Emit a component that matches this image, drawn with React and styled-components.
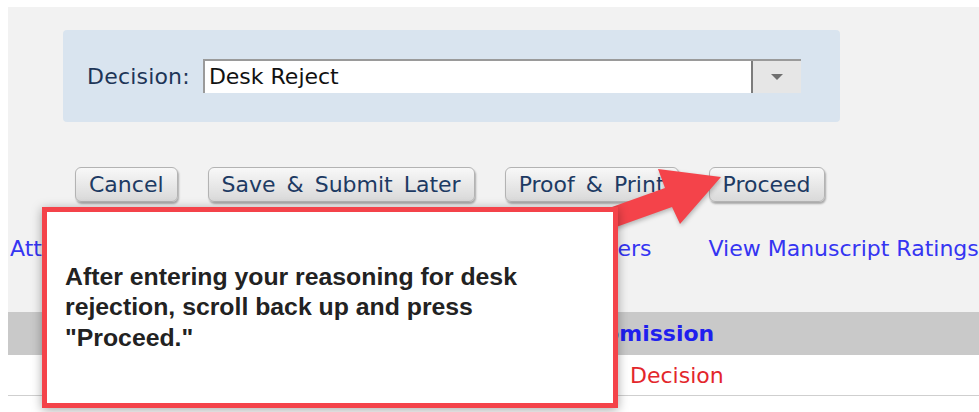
import styled, { createGlobalStyle } from 'styled-components';

const GlobalStyle = createGlobalStyle`
  body {
    margin: 0;
    background: #ffffff;
    font-family: "DejaVu Sans", Verdana, sans-serif;
  }
`;

const Page = styled.div`
  position: relative;
  display: flex;
  flex-direction: column;
  height: 405px;
  margin: 7px 0 0 8px;
  background: #f2f2f2;
  overflow: hidden;
`;

const DecisionPanel = styled.div`
  display: flex;
  align-items: center;
  box-sizing: border-box;
  width: 777px;
  height: 92px;
  margin: 23px 0 0 55px;
  padding: 0 24px;
  background: #d9e4ef;
  border-radius: 4px;
`;

const Label = styled.label`
  margin-right: 13px;
  font-size: 22px;
  letter-spacing: 0.2px;
  color: #1d3557;
`;

const Select = styled.div`
  display: flex;
  box-sizing: border-box;
  width: 598px;
  height: 34px;
  background: #ffffff;
  border-top: 2px solid #9a9a9a;
  border-left: 2px solid #9a9a9a;

  .value {
    flex: 1;
    padding-left: 4px;
    font-size: 22px;
    line-height: 32px;
    color: #111111;
  }
`;

const DropButton = styled.div`
  display: flex;
  align-items: center;
  justify-content: center;
  width: 48px;
  background: #e6e6e6;
  border-left: 2px solid #7c7c7c;

  &::after {
    content: '';
    border-left: 6px solid transparent;
    border-right: 6px solid transparent;
    border-top: 6px solid #6f6f6f;
  }
`;

const ButtonRow = styled.div`
  display: flex;
  gap: 30px;
  margin: 45px 0 0 67px;
`;

const Button = styled.button`
  height: 35px;
  padding: 0 13px;
  font-family: "DejaVu Sans", Verdana, sans-serif;
  font-size: 22px;
  word-spacing: 4px;
  color: #1d3a63;
  background: linear-gradient(#f8f8f8, #d9d9d9);
  border: 1px solid #b3b3b3;
  border-radius: 6px;
  box-shadow: 1px 2px 2px rgba(0, 0, 0, 0.3);
`;

const LinkRow = styled.div`
  display: flex;
  gap: ${(p) => p.gap}px;
  margin-top: 34px;
  padding-left: 2px;
  white-space: nowrap;
`;

const NavLink = styled.a`
  font-size: 22px;
  line-height: 26px;
  color: #3535f2;
  text-decoration: none;
`;

const Table = styled.div`
  flex: 1;
  margin-top: 50px;
  background: #ffffff;
`;

const TableRow = styled.div`
  display: grid;
  grid-template-columns: 556px 1fr;
  align-items: center;
  height: ${(p) => (p.head ? 43 : 40)}px;
  background: ${(p) => (p.head ? '#c9c9c9' : '#ffffff')};
  border-bottom: ${(p) => (p.head ? 'none' : '1px solid #cfcfcf')};
  font-size: 22px;
  font-weight: ${(p) => (p.head ? 'bold' : 'normal')};
  color: ${(p) => (p.head ? '#1f1fee' : '#333333')};
`;

const Cell = styled.div`
  padding-left: ${(p) => p.indent || 8}px;
  color: ${(p) => p.tone || 'inherit'};
`;

const Callout = styled.div`
  position: absolute;
  z-index: 2;
  left: 34px;
  top: 200px;
  display: flex;
  align-items: center;
  box-sizing: border-box;
  width: 576px;
  height: 201px;
  padding: 0 48px 0 18px;
  background: #ffffff;
  border: 5px solid #f4434a;
  box-shadow: 0 2px 10px rgba(0, 0, 0, 0.35);
  font-family: "Liberation Sans", Arial, sans-serif;
  font-size: 24.8px;
  font-weight: bold;
  line-height: 30.5px;
  color: #222222;
`;

const Arrow = styled.svg`
  position: absolute;
  z-index: 1;
  left: 582px;
  top: 153px;
  filter: drop-shadow(1px 2px 2px rgba(0, 0, 0, 0.25));
`;

export default function App() {
  return (
    <>
      <GlobalStyle />
      <Page>
        <DecisionPanel>
          <Label>Decision:</Label>
          <Select>
            <span className="value">Desk Reject</span>
            <DropButton />
          </Select>
        </DecisionPanel>

        <ButtonRow>
          <Button type="button">Cancel</Button>
          <Button type="button">Save &amp; Submit Later</Button>
          <Button type="button">Proof &amp; Print</Button>
          <Button type="button">Proceed</Button>
        </ButtonRow>

        <LinkRow gap={57}>
          <NavLink href="#">Attach Files</NavLink>
          <NavLink href="#">Send Decision Letter Copies to Reviewers</NavLink>
          <NavLink href="#">View Manuscript Ratings</NavLink>
        </LinkRow>

        <Table>
          <TableRow head>
            <Cell />
            <Cell>Submission</Cell>
          </TableRow>
          <TableRow>
            <Cell />
            <Cell indent={66} tone="#e3262b">Decision</Cell>
          </TableRow>
        </Table>

        <Arrow width="140" height="80" viewBox="0 0 140 80">
          <polygon
            points="8,52 75,28 68,9 131,17 90,64 82,47 15,71"
            fill="#f4434a"
          />
        </Arrow>

        <Callout>
          After entering your reasoning for desk rejection, scroll back up and press &quot;Proceed.&quot;
        </Callout>
      </Page>
    </>
  );
}
